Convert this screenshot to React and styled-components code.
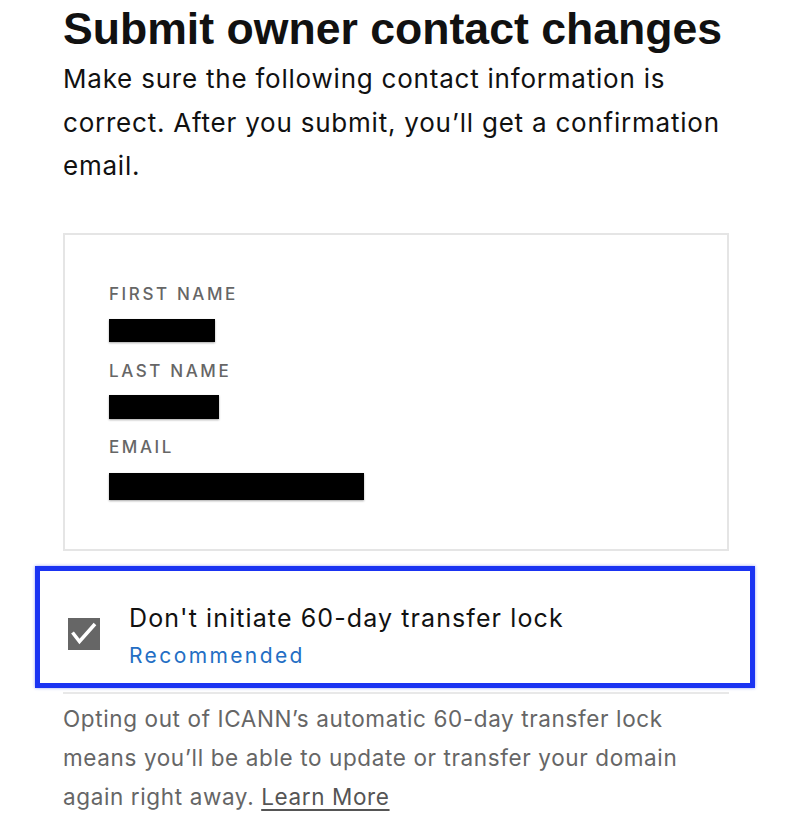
import React from "react";
import styled, { createGlobalStyle } from "styled-components";

const Global = createGlobalStyle`
  html, body { margin: 0; padding: 0; background: #fff; }
  body { font-family: "Inter", "Liberation Sans", Arial, sans-serif; color: #111; }
`;

const Page = styled.div`
  width: 666px;
  padding: 0 0 0 63px;
  display: flex;
  flex-direction: column;
`;

const Title = styled.h1`
  margin: 0;
  padding-top: 3px;
  font-family: "Liberation Sans", Arial, sans-serif;
  font-weight: 700;
  font-size: 44.6px;
  line-height: 52px;
  color: #111;
  white-space: nowrap;
`;

const Intro = styled.p`
  margin: 2px -24px 0 0;
  font-family: "Inter", sans-serif;
  font-size: 26px;
  line-height: 43.5px;
  letter-spacing: 0.78px;
  color: #111;
`;

const Card = styled.div`
  margin-top: 45px;
  border: 2px solid #e5e5e5;
  padding: 47px 44px 49px;
  display: flex;
  flex-direction: column;
`;

const Label = styled.div`
  font-family: "Inter", sans-serif;
  font-weight: 500;
  font-size: 17px;
  line-height: 24px;
  letter-spacing: 2.6px;
  color: #666;
  margin-top: ${(p) => p.$mt || 0}px;
`;

const Redact = styled.div`
  background: #000;
  height: ${(p) => p.$h}px;
  width: ${(p) => p.$w}px;
  margin-top: ${(p) => p.$mt}px;
  box-shadow: 0 1px 2px rgba(0, 0, 0, 0.35);
`;

const Highlight = styled.div`
  margin: 15px -26px 0 -28px;
  border: 5px solid #1a33f2;
  box-shadow: 0 0 3px rgba(26, 51, 242, 0.45);
  padding: 30px 24px 10px 28px;
  display: flex;
  align-items: flex-start;
  gap: 29px;
`;

const Check = styled.div`
  width: 32px;
  height: 32px;
  background: #666;
  margin-top: 17px;
  flex: none;
  display: flex;
`;

const OptionText = styled.div`
  display: flex;
  flex-direction: column;
`;

const OptionTitle = styled.div`
  font-family: "Inter", sans-serif;
  font-size: 25px;
  line-height: 34px;
  letter-spacing: 1.1px;
  color: #111;
`;

const Recommended = styled.div`
  margin-top: 4px;
  font-family: "Inter", sans-serif;
  font-size: 21px;
  line-height: 34px;
  letter-spacing: 2.4px;
  color: #236ec4;
`;

const Divider = styled.div`
  height: 2px;
  background: #e8e8e8;
  margin-top: 4px;
`;

const Footer = styled.p`
  margin: 5px 0 0;
  font-family: "Inter", sans-serif;
  font-size: 22.5px;
  line-height: 39px;
  letter-spacing: 0.62px;
  color: #666;
`;

const LearnMore = styled.a`
  color: #555;
  text-decoration: underline;
  text-decoration-thickness: 1.5px;
  text-underline-offset: 4px;
`;

export default function App() {
  return (
    <>
      <Global />
      <Page>
        <Title>Submit owner contact changes</Title>
        <Intro>
          Make sure the following contact information is correct. After you
          submit, you’ll get a confirmation email.
        </Intro>
        <Card>
          <Label>FIRST NAME</Label>
          <Redact $w={106} $h={23} $mt={13} />
          <Label $mt={17}>LAST NAME</Label>
          <Redact $w={110} $h={24} $mt={12} />
          <Label $mt={16}>EMAIL</Label>
          <Redact $w={255} $h={27} $mt={14} />
        </Card>
        <Highlight>
          <Check>
            <svg width="32" height="32" viewBox="0 0 32 32">
              <path
                d="M4.5 14.5 L11.5 23.5 L27 6"
                fill="none"
                stroke="#fff"
                strokeWidth="3.5"
                strokeLinejoin="miter"
              />
            </svg>
          </Check>
          <OptionText>
            <OptionTitle>Don't initiate 60-day transfer lock</OptionTitle>
            <Recommended>Recommended</Recommended>
          </OptionText>
        </Highlight>
        <Divider />
        <Footer>
          Opting out of ICANN’s automatic 60-day transfer lock means you’ll be
          able to update or transfer your domain again right away.{" "}
          <LearnMore href="#">Learn More</LearnMore>
        </Footer>
      </Page>
    </>
  );
}
